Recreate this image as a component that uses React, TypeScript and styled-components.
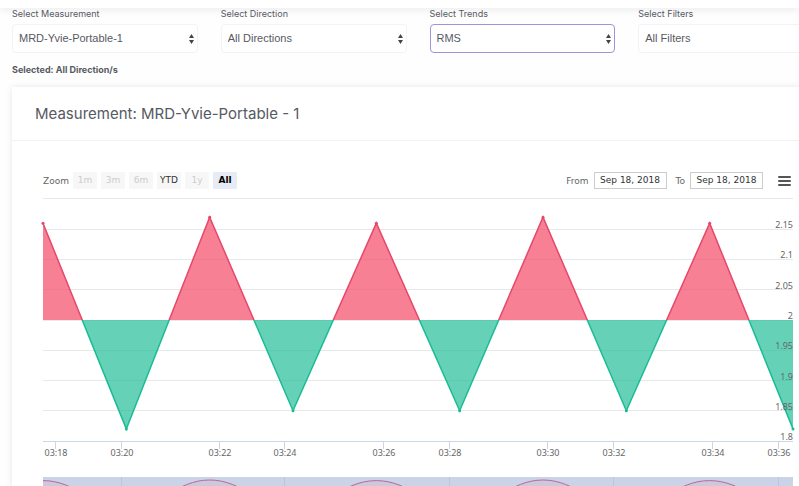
import React, { useState } from "react";
import styled, { createGlobalStyle } from "styled-components";

const GlobalStyle = createGlobalStyle`
  * { box-sizing: border-box; }
  body {
    margin: 0;
    background: #fefefe;
    color: #575962;
    font-family: Inter, "Open Sans", sans-serif;
    overflow: hidden;
  }
`;

const TopBar = styled.header`
  height: 8px;
  background: #fff;
  box-shadow: 0 1px 8px rgba(69, 65, 78, 0.12);
`;

const Main = styled.main`
  margin: 0 -25px 0 12px;
`;

const Filters = styled.div`
  display: grid;
  grid-template-columns: repeat(4, 1fr);
  gap: 23px;
`;

const Field = styled.div`
  display: flex;
  flex-direction: column;
  gap: 4px;
`;

const FieldLabel = styled.label`
  font-size: 9px;
  line-height: 12px;
`;

const SelectWrap = styled.div`
  position: relative;
`;

const Select = styled.select<{ $active?: boolean }>`
  display: block;
  width: 100%;
  height: 29px;
  padding: 0 20px 1px 6px;
  appearance: none;
  outline: none;
  border: 1px solid ${(p) => (p.$active ? "#9b95d9" : "#f2f3f7")};
  border-radius: 4px;
  background: #fff;
  color: #575962;
  font-family: "Liberation Sans", Arial, sans-serif;
  font-size: 11px;
`;

const Arrows = styled.svg`
  position: absolute;
  right: 4px;
  top: 10px;
  width: 5px;
  height: 10px;
  pointer-events: none;
`;

const Selected = styled.p`
  margin: 11px 0;
  font-size: 9px;
  line-height: 12px;
  font-weight: 700;
`;

const Card = styled.section`
  background: #fff;
  box-shadow: 0 0 6px rgba(69, 65, 78, 0.12);
`;

const CardHeader = styled.div`
  display: flex;
  align-items: center;
  height: 54px;
  padding: 0 23px;
  border-bottom: 1px solid #f1f2f6;
`;

const Title = styled.h3`
  margin: 0;
  font-size: 15px;
  line-height: 20px;
  font-weight: 400;
`;

const ChartArea = styled.div`
  padding: 31px 31px 0;
`;

const Toolbar = styled.div`
  display: flex;
  align-items: center;
  height: 17px;
  font-family: "DejaVu Sans", Verdana, sans-serif;
  font-size: 9px;
  color: #666;
`;

const ZoomGroup = styled.div`
  display: flex;
  align-items: center;
  gap: 4px;
`;

const ZoomCaption = styled.span`
  width: 26px;
`;

const ZoomButton = styled.button<{ $active?: boolean }>`
  width: 24px;
  height: 17px;
  padding: 0;
  border: 0;
  border-radius: 1px;
  background: ${(p) => (p.$active ? "#e6ebf5" : "#f7f7f7")};
  color: ${(p) => (p.$active ? "#000" : "#333")};
  font: inherit;
  font-weight: ${(p) => (p.$active ? 700 : 400)};
  line-height: 15px;
  &:disabled { color: #ccc; }
`;

const Range = styled.div`
  display: flex;
  align-items: center;
  margin-left: auto;
  gap: 9px;
`;

const RangeLabel = styled.label`
  display: flex;
  align-items: center;
  gap: 5px;
`;

const DateInput = styled.input`
  width: 73px;
  height: 17px;
  padding: 0 0 1px;
  border: 1px solid #ccc;
  background: #fff;
  color: #333;
  font: inherit;
  text-align: center;
`;

const MenuButton = styled.button`
  display: flex;
  margin-left: 14px;
  padding: 0 1px 0 0;
  border: 0;
  background: none;
`;

const Chart = styled.svg`
  display: block;
  width: 100%;
  overflow: visible;
  font-family: "Noto Sans", "Open Sans", sans-serif;
  font-size: 9px;
  fill: #666;
`;

const filters = [
  { id: "measurement", label: "Select Measurement", value: "MRD-Yvie-Portable-1" },
  { id: "direction", label: "Select Direction", value: "All Directions" },
  { id: "trends", label: "Select Trends", value: "RMS", active: true },
  { id: "filters", label: "Select Filters", value: "All Filters" },
];

const ranges = ["1m", "3m", "6m", "YTD", "1y", "All"];
const enabled = ["YTD", "All"];

const values = [2.16, 1.82, 2.17, 1.85, 2.16, 1.85, 2.17, 1.85, 2.16, 1.82];
const levels = [2.15, 2.1, 2.05, 2, 1.95, 1.9, 1.85, 1.8];
const times = [
  { x: 13, t: "03:18" }, { x: 79, t: "03:20" }, { x: 177, t: "03:22" },
  { x: 242, t: "03:24" }, { x: 341, t: "03:26" }, { x: 407, t: "03:28" },
  { x: 505, t: "03:30" }, { x: 571, t: "03:32" }, { x: 670, t: "03:34" },
  { x: 736, t: "03:36" },
];

const BASE = 131;
const xOf = (i: number) => (i * 750) / (values.length - 1);
const yOf = (v: number) => BASE - (v - 2) * 605;
const line = values.map((v, i) => `${xOf(i)},${yOf(v)}`).join(" ");
const area = `0,${BASE} ${line} 750,${BASE}`;

const navY = (v: number) => (v > 2 ? 291 + (2.17 - v) * 60 : 319);
const navPath = values
  .map((v, i) => {
    const y = navY(v);
    if (i === 0) return `M0,${y}`;
    const py = navY(values[i - 1]);
    return `C${xOf(i - 0.6)},${py} ${xOf(i - 0.4)},${y} ${xOf(i)},${y}`;
  })
  .join(" ");

function TrendChart() {
  return (
    <Chart viewBox="0 0 750 300" role="img" aria-label="RMS trend">
      <defs>
        <clipPath id="above"><rect x="-3" y="0" width="756" height={BASE} /></clipPath>
        <clipPath id="below"><rect x="-3" y={BASE} width="756" height="150" /></clipPath>
      </defs>
      <path d="M0 9.5H750" stroke="#e6e9ea" />
      {levels.slice(0, 7).map((v) => (
        <path key={v} d={`M0 ${Math.floor(yOf(v)) + 0.5}H750`} stroke="#e6e9ea" />
      ))}
      <path d="M0 252.5H750" stroke="#ccd6eb" />
      {[{ c: "#f4516c", s: "#e5486a", id: "above" }, { c: "#1abc94", s: "#1abc94", id: "below" }].map((z) => (
        <g key={z.id} clipPath={`url(#${z.id})`}>
          <polygon points={area} fill={z.c} fillOpacity={z.id === "above" ? 0.73 : 0.67} />
          <polyline points={line} fill="none" stroke={z.s} strokeWidth="1.5" />
          {values.map((v, i) => (
            <circle key={i} cx={xOf(i)} cy={yOf(v)} r="1.5" fill={z.s} />
          ))}
        </g>
      ))}
      {levels.map((v) => (
        <text key={v} x="750" y={Math.round(yOf(v)) - 1} textAnchor="end">{v}</text>
      ))}
      {times.map(({ x, t }) => (
        <g key={t}>
          <path d={`M${x - 0.5} 252V260`} stroke="#ccd6eb" />
          <text x={x} y="267" textAnchor="middle">{t}</text>
        </g>
      ))}
      <rect x="0" y="288" width="750" height="60" fill="#cad3e7" />
      <path d={`${navPath} V340 H0 Z`} fill="#d6aecb" fillOpacity="0.3" />
      {[79, 242, 407, 571, 736].map((x) => (
        <path key={x} d={`M${x - 0.5} 288V340`} stroke="#bbc6dc" />
      ))}
      <path d={navPath} fill="none" stroke="#b56a98" />
    </Chart>
  );
}

export default function App() {
  const [range, setRange] = useState("All");
  return (
    <>
      <GlobalStyle />
      <TopBar />
      <Main>
        <Filters>
          {filters.map((f) => (
            <Field key={f.id}>
              <FieldLabel htmlFor={f.id}>{f.label}</FieldLabel>
              <SelectWrap>
                <Select id={f.id} $active={f.active}>
                  <option>{f.value}</option>
                </Select>
                <Arrows viewBox="0 0 5 10" fill="#444" aria-hidden="true">
                  <path d="M0 4 2.5 0 5 4ZM0 6 2.5 10 5 6Z" />
                </Arrows>
              </SelectWrap>
            </Field>
          ))}
        </Filters>
        <Selected>Selected: All Direction/s</Selected>
        <Card>
          <CardHeader>
            <Title>Measurement: MRD-Yvie-Portable - 1</Title>
          </CardHeader>
          <ChartArea>
            <Toolbar>
              <ZoomGroup>
                <ZoomCaption>Zoom</ZoomCaption>
                {ranges.map((r) => (
                  <ZoomButton
                    key={r}
                    type="button"
                    $active={r === range}
                    disabled={!enabled.includes(r)}
                    onClick={() => setRange(r)}
                  >
                    {r}
                  </ZoomButton>
                ))}
              </ZoomGroup>
              <Range>
                <RangeLabel>From <DateInput defaultValue="Sep 18, 2018" /></RangeLabel>
                <RangeLabel>To <DateInput defaultValue="Sep 18, 2018" /></RangeLabel>
              </Range>
              <MenuButton type="button" aria-label="Chart menu">
                <svg width="15" height="12" viewBox="0 0 15 12" stroke="#555" strokeWidth="2" strokeLinecap="round">
                  <path d="M2 2H13M2 6H13M2 10H13" />
                </svg>
              </MenuButton>
            </Toolbar>
            <TrendChart />
          </ChartArea>
        </Card>
      </Main>
    </>
  );
}
